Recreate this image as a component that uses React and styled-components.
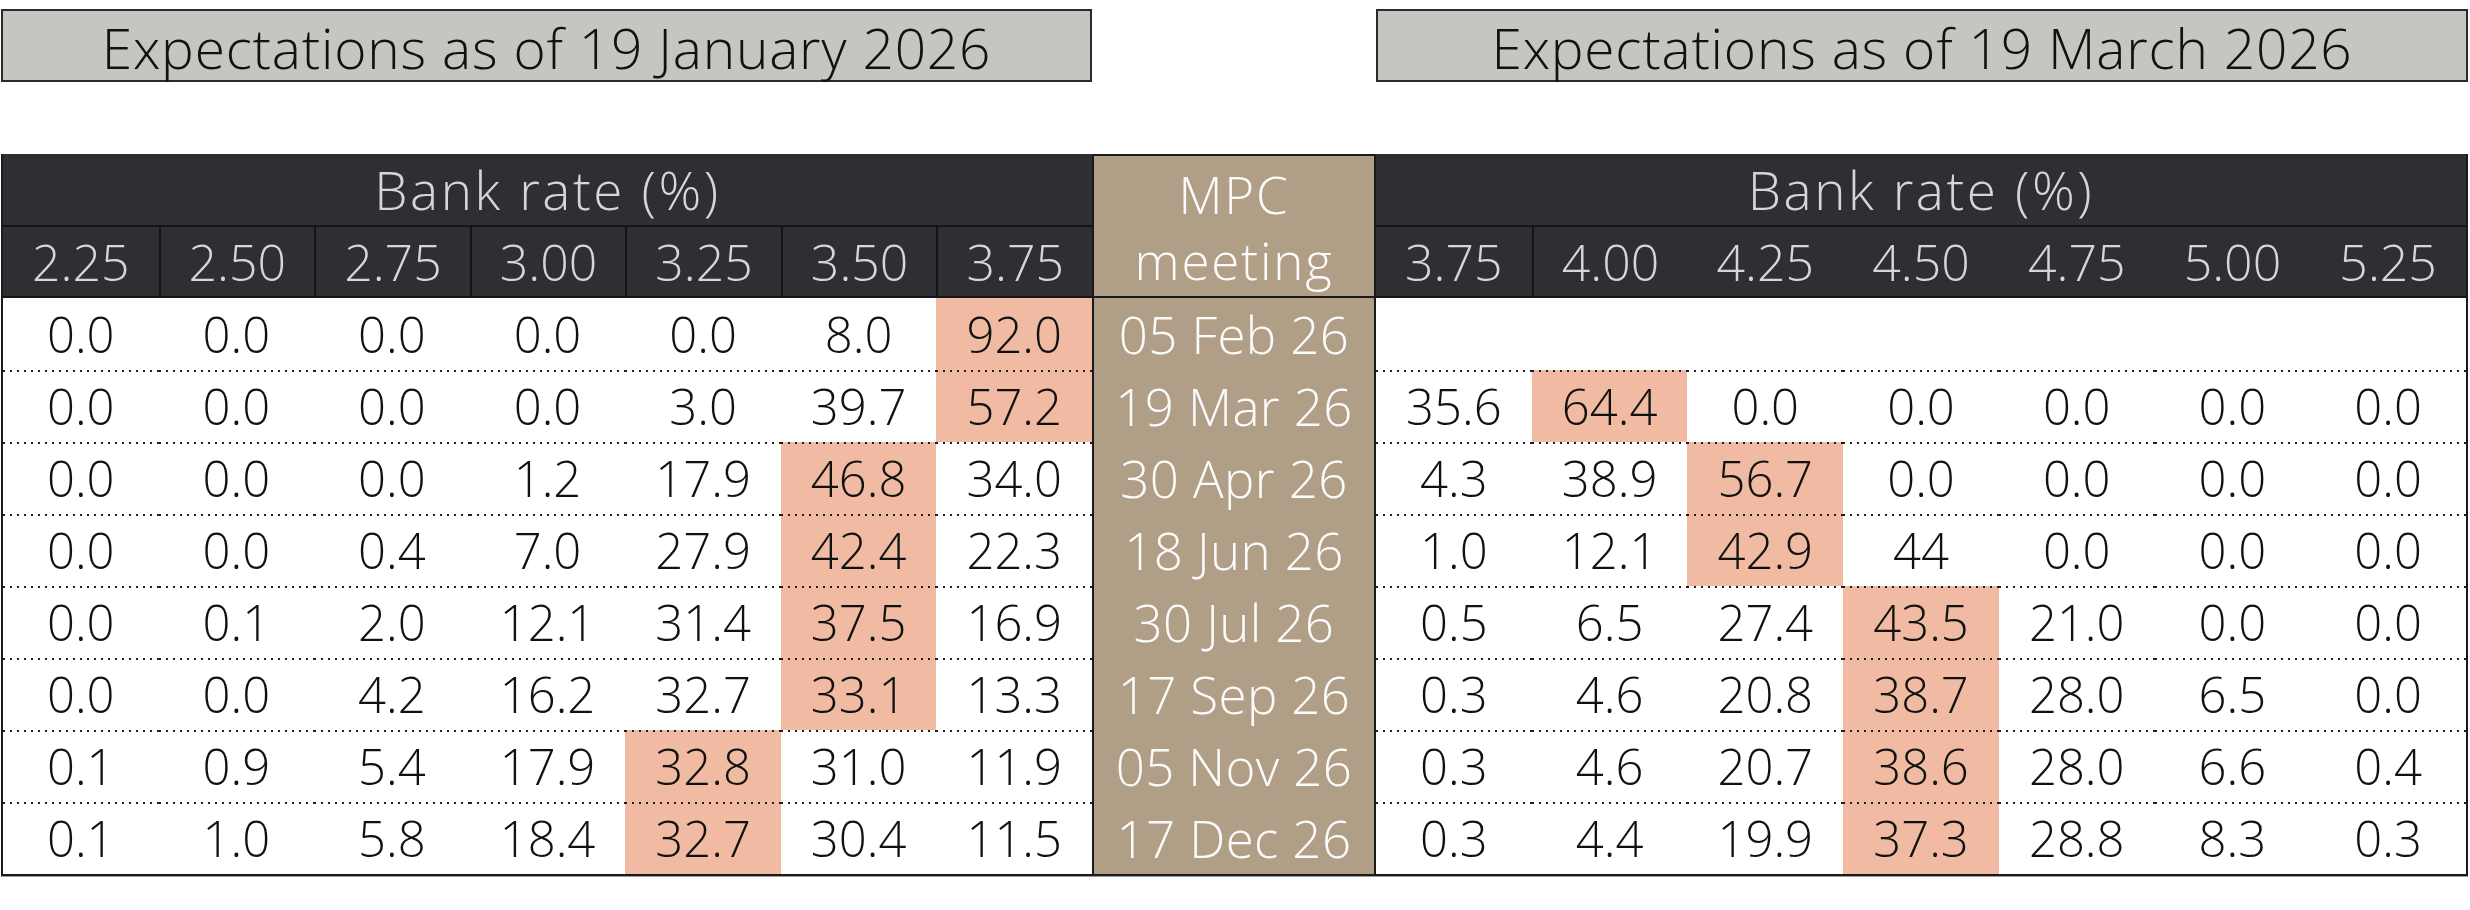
import React from "react";
import styled, { createGlobalStyle } from "styled-components";

const GlobalStyle = createGlobalStyle`
  html, body { margin: 0; padding: 0; background: #ffffff; }
  body {
    font-family: "Open Sans", "Noto Sans", "DejaVu Sans", sans-serif;
    font-weight: 300;
  }
`;

const INK = "#1a1a1a";
const HEAD_BG = "#2f2e33";
const HEAD_TEXT = "#d6d6d6";
const TAN = "#b09e87";
const SALMON = "#f0bba2";

const Page = styled.div`
  width: 2470px;
  height: 910px;
  box-sizing: border-box;
  padding: 9px 2px 0 1px;
  display: grid;
  grid-template-columns: 1091px 284px 1092px;
  grid-template-rows: 73px auto;
  row-gap: 72px;
`;

const TitleBox = styled.div`
  grid-column: ${(p) => p.$col};
  box-sizing: border-box;
  background: #c5c6c0;
  border: 2px solid #2a2a2a;
  display: flex;
  align-items: center;
  justify-content: center;
  padding-top: 4px;
  font-size: 55px;
  letter-spacing: 0.8px;
  color: #111;
  white-space: nowrap;
`;

const TableArea = styled.div`
  grid-column: 1 / -1;
  display: flex;
  align-items: flex-start;
`;

const Panel = styled.div`
  box-sizing: border-box;
  width: ${(p) => (p.$side === "left" ? 1091 : 1092)}px;
  border-bottom: 2px solid ${INK};
  border-left: ${(p) => (p.$side === "left" ? `2px solid ${INK}` : "none")};
  border-right: ${(p) => (p.$side === "right" ? `2px solid ${INK}` : "none")};
  box-shadow: 0 1px 0 #9a9a9a;
`;

const Band = styled.div`
  height: 71px;
  background: ${HEAD_BG};
  border-bottom: 2px solid #141414;
  display: flex;
  align-items: center;
  justify-content: center;
  color: ${HEAD_TEXT};
  font-size: 53px;
  letter-spacing: 2.6px;
`;

const RateRow = styled.div`
  height: 69px;
  background: ${HEAD_BG};
  border-bottom: 2px solid #141414;
  display: grid;
  grid-template-columns: repeat(7, 1fr);
`;

const RateCell = styled.div`
  display: flex;
  align-items: center;
  justify-content: center;
  color: ${HEAD_TEXT};
  font-size: 50px;
  border-left: ${(p) => (p.$divider ? "2px solid #141414" : "none")};
`;

const DataRow = styled.div`
  height: 72px;
  display: grid;
  grid-template-columns: repeat(7, 1fr);
`;

const dots =
  "linear-gradient(to right, #1e1e1e 0 2px, transparent 2px 7px) 0 0 / 7px 2px repeat-x";

const DataCell = styled.div`
  display: flex;
  align-items: center;
  justify-content: center;
  font-size: 49px;
  color: #111;
  background: ${(p) => (p.$dotted ? `${dots}, ` : "")}${(p) =>
      p.$hot ? SALMON : "#ffffff"};
`;

const MpcColumn = styled.div`
  box-sizing: border-box;
  width: 284px;
  border: 2px solid ${INK};
  background: ${TAN};
  color: #fbfbfb;
  box-shadow: 0 1px 0 #9a9a9a;
`;

const MpcHead = styled.div`
  box-sizing: border-box;
  height: 142px;
  padding-top: 2px;
  border-bottom: 2px solid ${INK};
  display: flex;
  flex-direction: column;
  align-items: center;
  justify-content: center;
  font-size: 51px;
  line-height: 66px;
  letter-spacing: 1.8px;
`;

const MpcDate = styled.div`
  height: 72px;
  display: flex;
  align-items: center;
  justify-content: center;
  font-size: 51px;
  letter-spacing: 0.4px;
  white-space: nowrap;
`;

const dates = [
  "05 Feb 26",
  "19 Mar 26",
  "30 Apr 26",
  "18 Jun 26",
  "30 Jul 26",
  "17 Sep 26",
  "05 Nov 26",
  "17 Dec 26",
];

const leftRates = ["2.25", "2.50", "2.75", "3.00", "3.25", "3.50", "3.75"];
const rightRates = ["3.75", "4.00", "4.25", "4.50", "4.75", "5.00", "5.25"];

const leftData = [
  { v: ["0.0", "0.0", "0.0", "0.0", "0.0", "8.0", "92.0"], hot: 6 },
  { v: ["0.0", "0.0", "0.0", "0.0", "3.0", "39.7", "57.2"], hot: 6 },
  { v: ["0.0", "0.0", "0.0", "1.2", "17.9", "46.8", "34.0"], hot: 5 },
  { v: ["0.0", "0.0", "0.4", "7.0", "27.9", "42.4", "22.3"], hot: 5 },
  { v: ["0.0", "0.1", "2.0", "12.1", "31.4", "37.5", "16.9"], hot: 5 },
  { v: ["0.0", "0.0", "4.2", "16.2", "32.7", "33.1", "13.3"], hot: 5 },
  { v: ["0.1", "0.9", "5.4", "17.9", "32.8", "31.0", "11.9"], hot: 4 },
  { v: ["0.1", "1.0", "5.8", "18.4", "32.7", "30.4", "11.5"], hot: 4 },
];

const rightData = [
  { v: ["", "", "", "", "", "", ""], hot: -1 },
  { v: ["35.6", "64.4", "0.0", "0.0", "0.0", "0.0", "0.0"], hot: 1 },
  { v: ["4.3", "38.9", "56.7", "0.0", "0.0", "0.0", "0.0"], hot: 2 },
  { v: ["1.0", "12.1", "42.9", "44", "0.0", "0.0", "0.0"], hot: 2 },
  { v: ["0.5", "6.5", "27.4", "43.5", "21.0", "0.0", "0.0"], hot: 3 },
  { v: ["0.3", "4.6", "20.8", "38.7", "28.0", "6.5", "0.0"], hot: 3 },
  { v: ["0.3", "4.6", "20.7", "38.6", "28.0", "6.6", "0.4"], hot: 3 },
  { v: ["0.3", "4.4", "19.9", "37.3", "28.8", "8.3", "0.3"], hot: 3 },
];

function RatePanel({ side, rates, data, dividerAt }) {
  return (
    <Panel $side={side}>
      <Band>Bank rate (%)</Band>
      <RateRow>
        {rates.map((r, i) => (
          <RateCell key={r} $divider={dividerAt(i)}>
            {r}
          </RateCell>
        ))}
      </RateRow>
      {data.map((row, ri) => (
        <DataRow key={ri}>
          {row.v.map((val, ci) => (
            <DataCell key={ci} $dotted={ri > 0} $hot={row.hot === ci}>
              {val}
            </DataCell>
          ))}
        </DataRow>
      ))}
    </Panel>
  );
}

export default function App() {
  return (
    <>
      <GlobalStyle />
      <Page>
        <TitleBox $col="1">Expectations as of 19 January 2026</TitleBox>
        <TitleBox $col="3">Expectations as of 19 March 2026</TitleBox>
        <TableArea>
          <RatePanel
            side="left"
            rates={leftRates}
            data={leftData}
            dividerAt={(i) => i > 0}
          />
          <MpcColumn>
            <MpcHead>
              <span>MPC</span>
              <span>meeting</span>
            </MpcHead>
            {dates.map((d) => (
              <MpcDate key={d}>{d}</MpcDate>
            ))}
          </MpcColumn>
          <RatePanel
            side="right"
            rates={rightRates}
            data={rightData}
            dividerAt={(i) => i === 1}
          />
        </TableArea>
      </Page>
    </>
  );
}
